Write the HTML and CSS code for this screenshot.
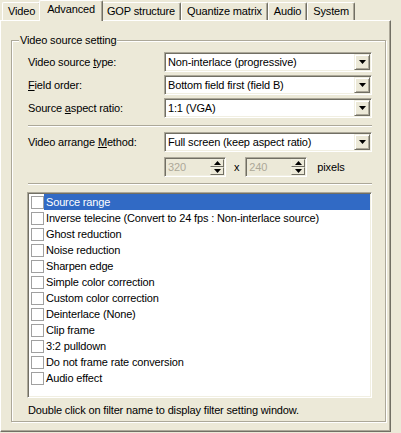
FILE: index.html
```html
<!DOCTYPE html>
<html>
<head>
<meta charset="utf-8">
<link rel="stylesheet" href="styles.css">
</head>
<body>
<div class="window">
  <div class="tabs">
    <div class="tab">Video</div>
    <div class="tab active">Advanced</div>
    <div class="tab">GOP structure</div>
    <div class="tab">Quantize matrix</div>
    <div class="tab">Audio</div>
    <div class="tab">System</div>
  </div>
  <div class="panel">
    <div class="group">
      <span class="legend">Video source setting</span>
      <div class="form">
        <label class="lbl">Video source <u>t</u>ype:</label>
        <div class="combo"><span class="combo-text">Non-interlace (progressive)</span><span class="drop"><svg width="7" height="4" viewBox="0 0 7 4"><polygon points="0,0 7,0 3.5,4" fill="#000"/></svg></span></div>
        <label class="lbl"><u>F</u>ield order:</label>
        <div class="combo"><span class="combo-text">Bottom field first (field B)</span><span class="drop"><svg width="7" height="4" viewBox="0 0 7 4"><polygon points="0,0 7,0 3.5,4" fill="#000"/></svg></span></div>
        <label class="lbl">Source <u>a</u>spect ratio:</label>
        <div class="combo"><span class="combo-text">1:1 (VGA)</span><span class="drop"><svg width="7" height="4" viewBox="0 0 7 4"><polygon points="0,0 7,0 3.5,4" fill="#000"/></svg></span></div>
      </div>
      <div class="sep"></div>
      <div class="form">
        <label class="lbl">Video arrange <u>M</u>ethod:</label>
        <div class="combo"><span class="combo-text">Full screen (keep aspect ratio)</span><span class="drop"><svg width="7" height="4" viewBox="0 0 7 4"><polygon points="0,0 7,0 3.5,4" fill="#000"/></svg></span></div>
        <span></span>
        <div class="size-row">
          <div class="spin"><span class="spin-text">320</span><span class="spin-btns"><span class="spin-btn"><svg width="7" height="4" viewBox="0 0 7 4"><polygon points="3.5,0 7,4 0,4" fill="#000"/></svg></span><span class="spin-btn"><svg width="7" height="4" viewBox="0 0 7 4"><polygon points="0,0 7,0 3.5,4" fill="#000"/></svg></span></span></div>
          <span class="times">x</span>
          <div class="spin"><span class="spin-text">240</span><span class="spin-btns"><span class="spin-btn"><svg width="7" height="4" viewBox="0 0 7 4"><polygon points="3.5,0 7,4 0,4" fill="#000"/></svg></span><span class="spin-btn"><svg width="7" height="4" viewBox="0 0 7 4"><polygon points="0,0 7,0 3.5,4" fill="#000"/></svg></span></span></div>
          <span class="unit">pixels</span>
        </div>
      </div>
      <div class="sep sep2"></div>
      <div class="list">
        <div class="row selected"><span class="check"></span><span class="item">Source range</span></div>
        <div class="row"><span class="check"></span><span class="item">Inverse telecine (Convert to 24 fps : Non-interlace source)</span></div>
        <div class="row"><span class="check"></span><span class="item">Ghost reduction</span></div>
        <div class="row"><span class="check"></span><span class="item">Noise reduction</span></div>
        <div class="row"><span class="check"></span><span class="item">Sharpen edge</span></div>
        <div class="row"><span class="check"></span><span class="item">Simple color correction</span></div>
        <div class="row"><span class="check"></span><span class="item">Custom color correction</span></div>
        <div class="row"><span class="check"></span><span class="item">Deinterlace (None)</span></div>
        <div class="row"><span class="check"></span><span class="item">Clip frame</span></div>
        <div class="row"><span class="check"></span><span class="item">3:2 pulldown</span></div>
        <div class="row"><span class="check"></span><span class="item">Do not frame rate conversion</span></div>
        <div class="row"><span class="check"></span><span class="item">Audio effect</span></div>
      </div>
      <div class="status">Double click on filter name to display filter setting window.</div>
    </div>
  </div>
</div>
</body>
</html>
```
FILE: styles.css
```css
* { box-sizing: border-box; }
html, body { margin: 0; padding: 0; }
body {
  background: #ECE9D8;
  font-family: "Liberation Sans", Arial, sans-serif;
  font-size: 11px;
  letter-spacing: -0.15px;
  color: #000;
  width: 401px;
  height: 433px;
  overflow: hidden;
}
u { text-decoration: underline; text-underline-offset: 1px; }

.window { width: 391px; }

.tabs {
  display: flex;
  align-items: flex-end;
  height: 20px;
  padding-left: 2px;
}
.tab {
  height: 18px;
  padding: 0 5px;
  line-height: 16px;
  border-left: 1px solid #fff;
  border-top: 1px solid #fff;
  border-right: 1px solid #716F64;
  border-radius: 2px 2px 0 0;
  box-shadow: inset -1px 0 #ACA899;
  white-space: nowrap;
}
.tab.active {
  position: relative;
  z-index: 1;
  height: 21px;
  margin: 0 -2px -1px;
  padding: 0 7px;
  line-height: 17px;
  background: #ECE9D8;
}

.panel {
  height: 412px;
  border-top: 1px solid #fff;
  border-left: 1px solid #fff;
  border-right: 1px solid #716F64;
  border-bottom: 1px solid #716F64;
  box-shadow: inset -1px -1px #ACA899;
  padding: 19px 4px 0 10px;
}

.group {
  position: relative;
  height: 382px;
  border: 1px solid #ACA899;
  box-shadow: inset 1px 1px #fff, 1px 1px #fff;
  padding: 11px 13px 0 16px;
}
.legend {
  position: absolute;
  top: -7px;
  left: 7px;
  padding: 0 1px;
  background: #ECE9D8;
  line-height: 13px;
}

.form {
  display: grid;
  grid-template-columns: 136px 1fr;
  row-gap: 3px;
  align-items: center;
}
.lbl { white-space: nowrap; }

.combo {
  display: flex;
  height: 20px;
  background: #fff;
  border: 1px solid;
  border-color: #ACA899 #fff #fff #ACA899;
  box-shadow: inset 1px 1px #716F64, inset -1px -1px #F1EFE2;
  padding: 1px;
}
.combo-text {
  flex: 1;
  padding-left: 2px;
  line-height: 16px;
  white-space: nowrap;
  overflow: hidden;
}
.drop {
  width: 16px;
  height: 16px;
  display: flex;
  align-items: center;
  justify-content: center;
  background: #ECE9D8;
  border: 1px solid;
  border-color: #F1EFE2 #716F64 #716F64 #F1EFE2;
  box-shadow: inset 1px 1px #fff, inset -1px -1px #ACA899;
}
.drop svg { display: block; }

.sep {
  height: 2px;
  border-top: 1px solid #ACA899;
  border-bottom: 1px solid #fff;
  margin: 7px 0 5px;
}
.sep2 { margin: 6px 0 7px; }

.size-row {
  display: flex;
  align-items: center;
  margin-top: 2px;
}
.spin {
  display: flex;
  width: 62px;
  height: 20px;
  background: #ECE9D8;
  border: 1px solid;
  border-color: #ACA899 #fff #fff #ACA899;
  box-shadow: inset 1px 1px #716F64, inset -1px -1px #F1EFE2;
  padding: 1px;
}
.spin-text {
  flex: 1;
  color: #ACA899;
  padding-left: 2px;
  line-height: 16px;
}
.spin-btns {
  display: flex;
  flex-direction: column;
  width: 14px;
}
.spin-btn {
  height: 8px;
  display: flex;
  align-items: center;
  justify-content: center;
  background: #ECE9D8;
  border: 1px solid;
  border-color: #F1EFE2 #716F64 #716F64 #F1EFE2;
}
.spin-btn svg { display: block; }
.times { margin: 0 6px 0 8px; }
.unit { margin-left: 10px; }

.list {
  height: 206px;
  margin-left: -1px;
  margin-right: 0;
  background: #fff;
  border: 1px solid;
  border-color: #ACA899 #fff #fff #ACA899;
  box-shadow: inset 1px 1px #716F64, inset -1px -1px #F1EFE2;
  padding: 1px;
}
.row {
  display: flex;
  align-items: center;
  height: 16px;
  padding-left: 2px;
}
.check {
  width: 13px;
  height: 13px;
  flex: none;
  border: 1px solid #A0A0A0;
  background: #fff;
}
.item {
  flex: 1;
  height: 16px;
  line-height: 16px;
  padding-left: 2px;
  white-space: nowrap;
}
.row.selected .item {
  background: #316AC5;
  color: #fff;
}

.status {
  margin-top: 6px;
  line-height: 13px;
  white-space: nowrap;
}
```
